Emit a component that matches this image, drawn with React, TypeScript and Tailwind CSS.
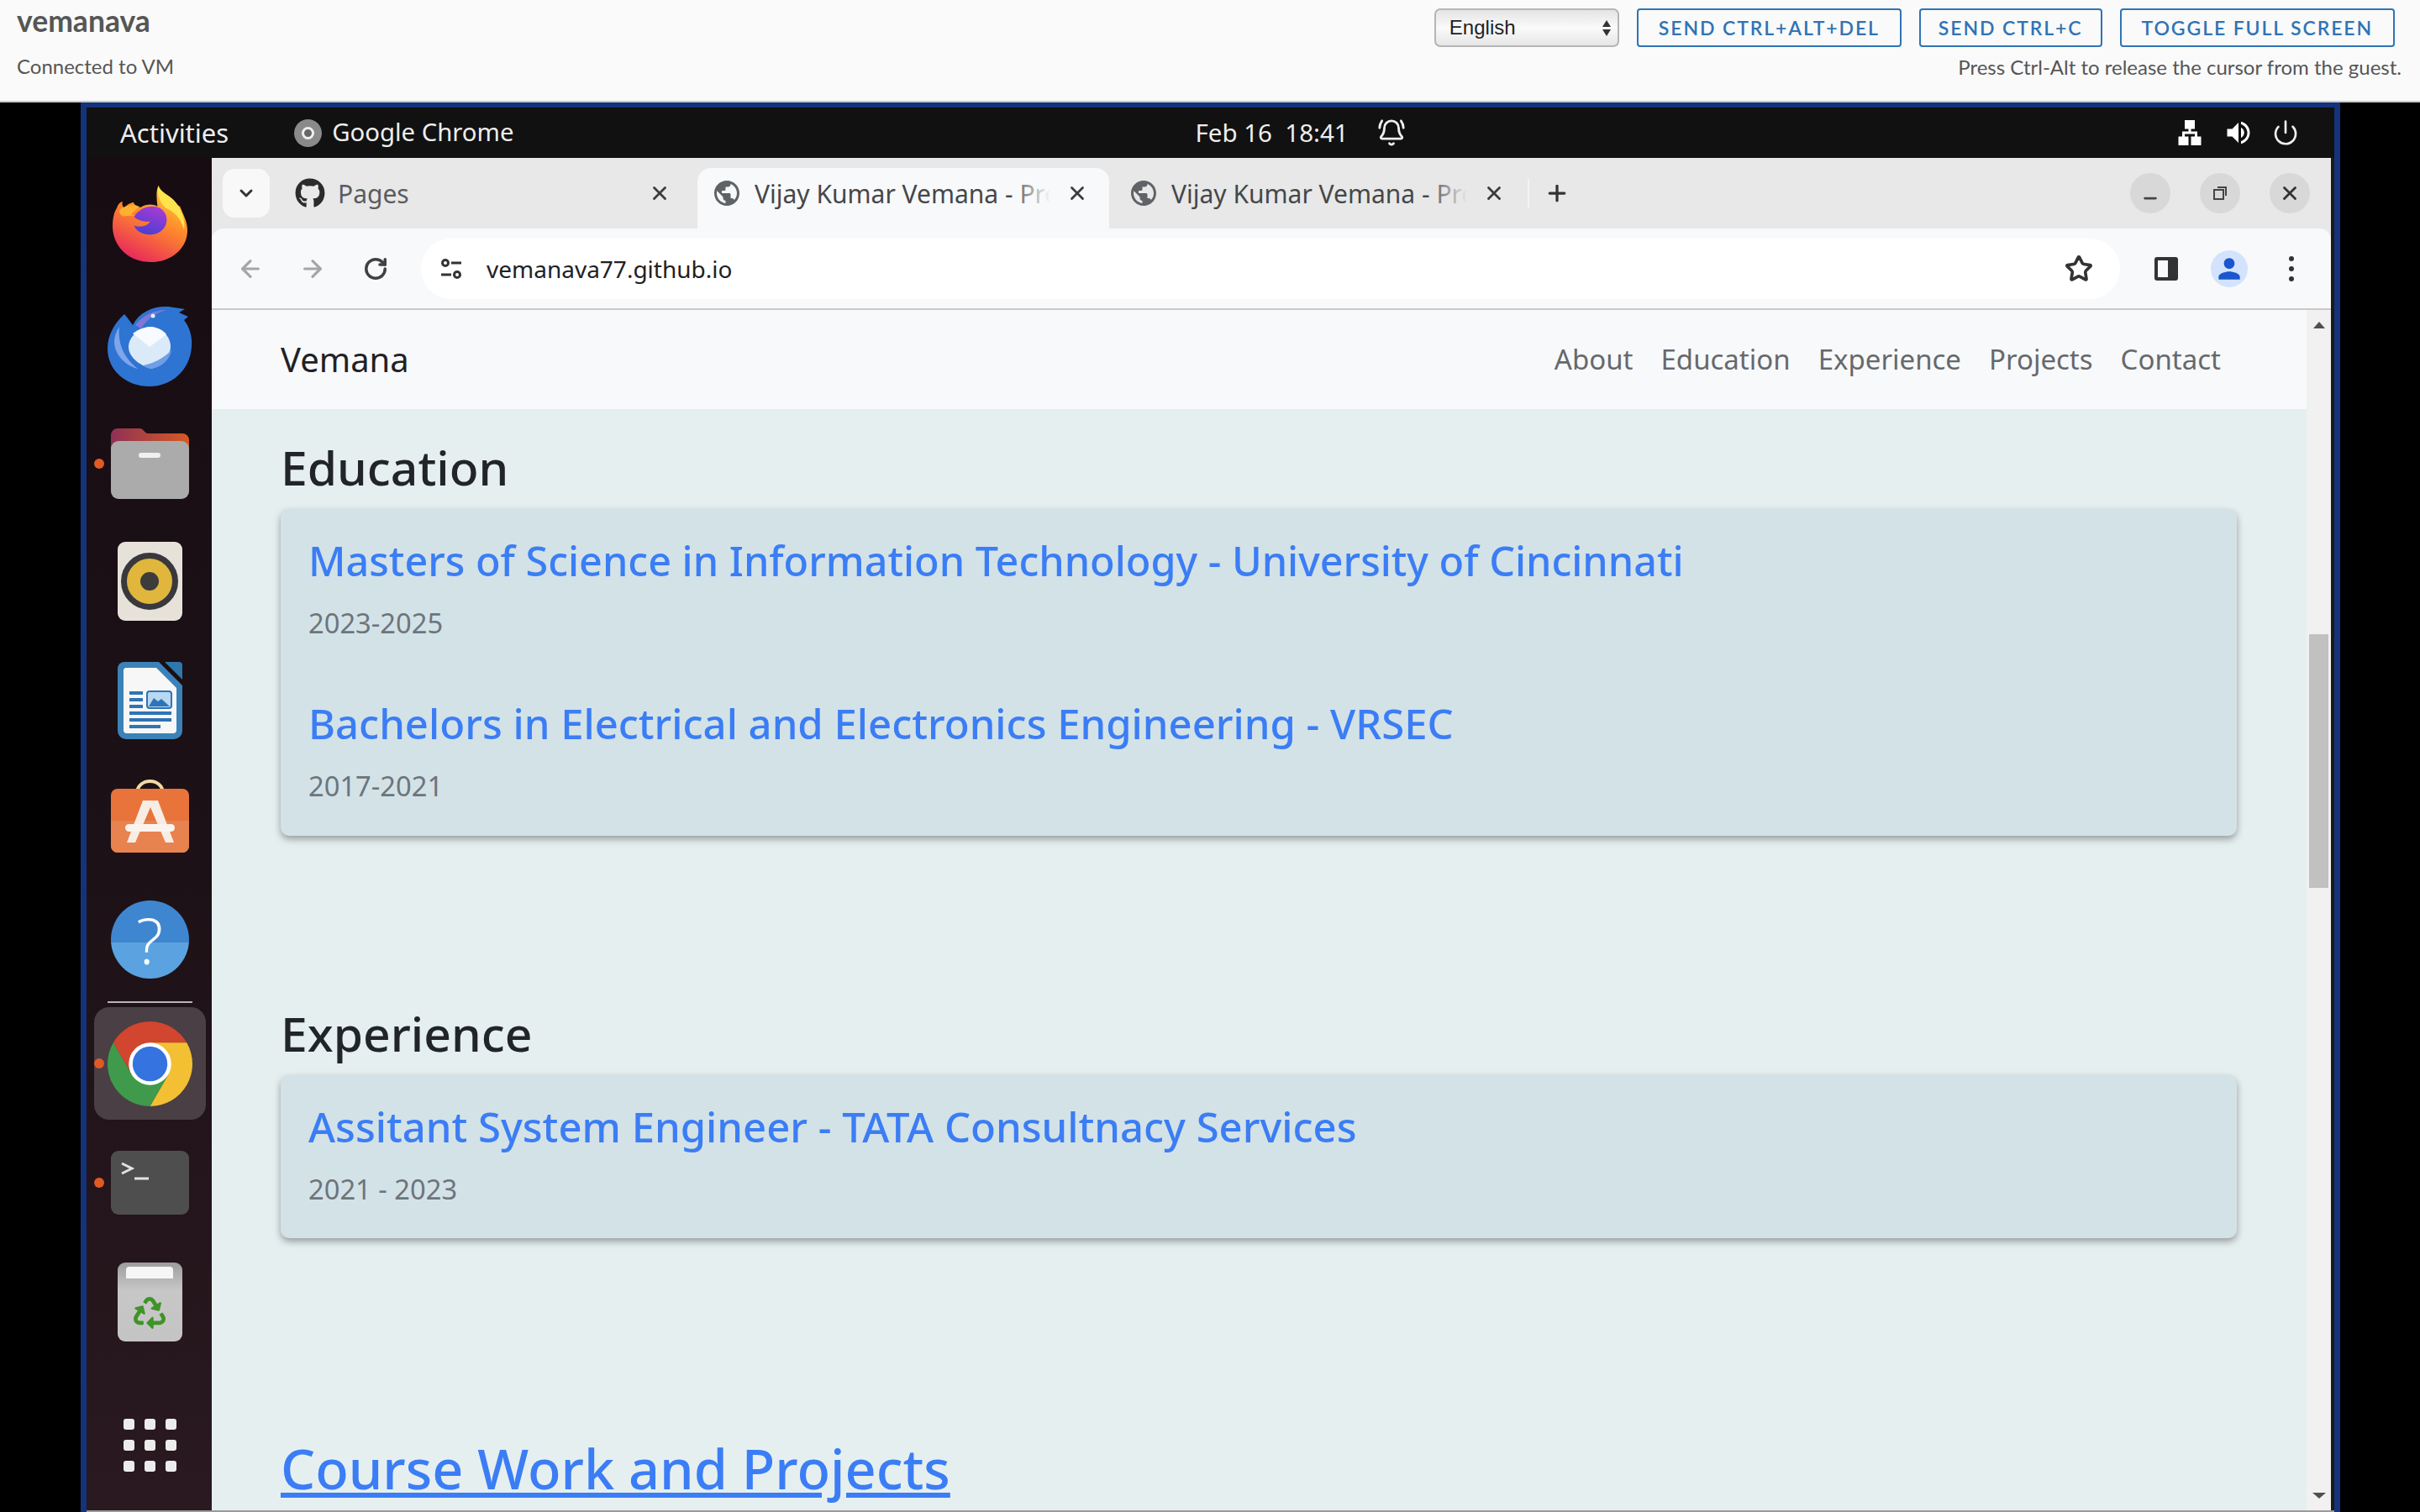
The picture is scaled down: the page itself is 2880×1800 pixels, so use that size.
import { Star, Power, BellRing, RotateCw, ArrowLeft, ArrowRight, ChevronDown, X, Plus, Minus } from "lucide-react";
import { FaGithub, FaRecycle } from "react-icons/fa";
import { MdPublic, MdPerson, MdLan, MdVolumeUp } from "react-icons/md";
import type { ReactNode } from "react";

const ubuntu = "font-['Noto_Sans','Open_Sans',sans-serif]";

function Firefox() {
  return (
    <svg viewBox="0 0 90 92" className="h-[91px] w-[89px]">
      <defs>
        <linearGradient id="ffBody" x1="0.8" y1="0" x2="0.3" y2="1">
          <stop offset="0" stopColor="#ffd53a" />
          <stop offset="0.45" stopColor="#ff8a2b" />
          <stop offset="1" stopColor="#e8265e" />
        </linearGradient>
        <linearGradient id="ffCore" x1="0.7" y1="0" x2="0.3" y2="1">
          <stop offset="0" stopColor="#a83ad6" />
          <stop offset="1" stopColor="#4a3fd0" />
        </linearGradient>
      </defs>
      <path d="M55 0c3 8 12 11 18 17 4 4 5 7 8 8l3 7c4 9 6 15 6 22 0 21-19 38-44 38S1 75 0 50c0-9 1-17 5-23 1-4 4-7 7-8-1 3 0 6 2 8 3-4 7-6 11-7 1 3 5 6 9 6 6-4 15-4 20-1-1-9-2-18 1-25Z" fill="url(#ffBody)" />
      <path d="M55 0c3 8 12 11 18 17 8 8 15 22 13 36-4-14-12-22-22-26-7-6-11-16-9-27Z" fill="#ffe34d" />
      <path d="M8 30c6-6 16-8 24-5-4 4-6 5-9 9 3 3 8 2 12 3 0 0-12-2-22 0-3-1-5-4-5-7Z" fill="#ffb02e" />
      <path d="M26 38c2-7 13-14 24-13 10 1 16 9 15 18-1 10-11 17-22 16-9-1-15-5-17-11 8 3 17 0 19-5-5 1-13 0-19-5Z" fill="url(#ffCore)" />
    </svg>
  );
}

function Thunderbird() {
  return (
    <svg viewBox="0 0 101 97" className="h-[97px] w-[101px]">
      <path d="M30 24C38 8 55 1 72 2L92 5 85 9 96 14 91 18C98 27 101 38 100 50 98 78 76 97 50 97 22 97 0 78 0 52 0 36 8 22 20 11 26 18 30 24 30 24Z" fill="#2e74d2" />
      <path d="M33 24C42 12 56 6 70 6 56 10 46 18 40 28Z" fill="#7f78d8" />
      <circle cx="54" cy="13" r="2.5" fill="#dff0ff" />
      <path d="M14 26C12 44 18 62 36 76 20 72 8 58 8 44c0-6 2-12 6-18Z" fill="#7fa5ea" />
      <path d="M52 26C66 28 75 38 75 50 75 60 62 72 52 76 38 72 25 62 25 50 25 38 38 26 52 26Z" fill="#dbeaf8" />
      <path d="M30 34C38 28 46 26 52 26 60 27 66 30 70 35L50 50Z" fill="#f7fbff" />
      <path d="M42 72C54 70 66 64 76 54 74 66 62 76 50 76Z" fill="#6f9fe6" />
    </svg>
  );
}

function Folder() {
  return (
    <svg viewBox="0 0 93 84" className="h-[84px] w-[93px]">
      <defs>
        <linearGradient id="fTab" x1="0" y1="0" x2="1" y2="0">
          <stop offset="0" stopColor="#8f3155" />
          <stop offset="1" stopColor="#d65a24" />
        </linearGradient>
      </defs>
      <path d="M0 8a8 8 0 0 1 8-8h26c5 0 6 6 10 6h41a8 8 0 0 1 8 8v20H0Z" fill="url(#fTab)" />
      <rect x="0" y="15" width="93" height="69" rx="9" fill="#ababab" />
      <rect x="33" y="29" width="26" height="6" rx="3" fill="#f0f0f0" />
    </svg>
  );
}

function Rhythmbox() {
  return (
    <div className="flex h-[94px] w-[77px] items-center justify-center rounded-[9px] bg-[#e6e2da]">
      <div className="flex h-[68px] w-[68px] items-center justify-center rounded-full border-[7px] border-[#38383d] bg-[#e0b63c]">
        <div className="h-[22px] w-[22px] rounded-full bg-[#3c3c3c]" />
      </div>
    </div>
  );
}

function Writer() {
  return (
    <svg viewBox="0 0 77 92" className="h-[92px] w-[77px]">
      <path d="M8 0h41l28 28v54a10 10 0 0 1-10 10H10A10 10 0 0 1 0 82V8a8 8 0 0 1 8-8Z" fill="#3b82b8" />
      <path d="M56 0h17a4 4 0 0 1 4 4v17Z" fill="#2f77ad" />
      <path d="M9 7h37l24 24v50a4 4 0 0 1-4 4H11a4 4 0 0 1-4-4V9Z" fill="#f7f7f7" />
      <path d="M14 35h16v4H14Zm0 8h16v4H14Zm0 8h16v4H14Zm0 8h50v4H14Zm0 8h50v4H14Zm0 8h37v4H14Z" fill="#2f74b5" />
      <rect x="35" y="35" width="29" height="20" rx="3" fill="#b8d8f2" stroke="#2f74b5" strokeWidth="2" />
      <path d="M37 53l6-10 5 4 4-3 10 9Z" fill="#2f74b5" />
    </svg>
  );
}

function AppStore() {
  return (
    <svg viewBox="0 0 93 88" className="h-[88px] w-[93px]">
      <path d="M31 18c0-20 31-20 31 0" fill="none" stroke="#f1d9a4" strokeWidth="4" />
      <rect x="0" y="12" width="93" height="76" rx="8" fill="#e8743b" />
      <path d="M0 50h93v30a8 8 0 0 1-8 8H8a8 8 0 0 1-8-8Z" fill="#e8824f" />
      <path d="M38 26h18l19 50H65L47 34 29 76H19Z" fill="#f8ede5" />
      <rect x="17" y="54" width="59" height="9" rx="4.5" fill="#fbf3ee" />
    </svg>
  );
}

function Help() {
  return (
    <div className="flex h-[93px] w-[93px] items-center justify-center rounded-full bg-[linear-gradient(180deg,#3f86d0_0%,#3f86d0_54%,#5ba3e0_54%,#5ba3e0_100%)] font-['Open_Sans',sans-serif] text-[76px] font-light leading-none text-white">
      ?
    </div>
  );
}

function Chrome() {
  return (
    <svg viewBox="0 0 100 100" className="h-[101px] w-[101px]">
      <path d="M93.3 25A50 50 0 0 0 6.7 25L28.35 62.5 50 50V25Z" fill="#d2452f" />
      <path d="M50 100A50 50 0 0 0 93.3 25H50V50L71.65 62.5Z" fill="#f3c033" />
      <path d="M6.7 25A50 50 0 0 0 50 100L71.65 62.5 50 50 28.35 62.5Z" fill="#409a4c" />
      <circle cx="50" cy="50" r="25" fill="#fff" />
      <circle cx="50" cy="50" r="20.5" fill="#3473e0" />
    </svg>
  );
}

function Terminal() {
  return (
    <div className="h-[76px] w-[93px] rounded-[9px] bg-[#4e4e4e] pl-[12px] pt-[12px]">
      <svg viewBox="0 0 34 24" className="h-[24px] w-[34px]" fill="none" stroke="#e2e2e2" strokeWidth="3">
        <path d="M1 3l12 6-12 6" />
        <path d="M16 21h17" />
      </svg>
    </div>
  );
}

function Trash() {
  return (
    <div className="flex h-[94px] w-[77px] flex-col items-center rounded-[9px] bg-[linear-gradient(180deg,#9d9d9d_0%,#c7c7c7_35%,#c4c4c4_100%)] pt-[5px]">
      <div className="h-[14px] w-[56px] rounded-t-[4px] bg-[#f6f6f6]" />
      <FaRecycle className="mt-[22px] h-[38px] w-[38px] text-[#3f9428]" />
    </div>
  );
}

function GridDots() {
  return (
    <div className="grid grid-cols-3 gap-x-[12px] gap-y-[12px]">
      {Array.from({ length: 9 }).map((_, i) => (
        <div key={i} className="h-[13px] w-[13px] rounded-[3px] bg-[#ececec]" />
      ))}
    </div>
  );
}

function Dock() {
  return (
    <aside className="flex w-[149px] shrink-0 flex-col items-center bg-[linear-gradient(180deg,#170c12_0%,#1c1116_50%,#2a1920_100%)] pl-px pt-[33px]">
      <Firefox />
      <div className="mt-[51px]"><Thunderbird /></div>
      <div className="relative mt-[50px]">
        <div className="absolute left-[-20px] top-1/2 h-[12px] w-[12px] -translate-y-1/2 rounded-full bg-[#e05a26]" />
        <Folder />
      </div>
      <div className="mt-[51px]"><Rhythmbox /></div>
      <div className="mt-[49px]"><Writer /></div>
      <div className="mt-[47px]"><AppStore /></div>
      <div className="mt-[57px]"><Help /></div>
      <div className="mt-[27px] h-[2px] w-[101px] bg-[#b9b3b5]" />
      <div className="relative mt-[5px] flex h-[134px] w-[133px] items-center justify-center rounded-[18px] bg-[#4a3f44]">
        <div className="absolute left-[0px] top-1/2 h-[12px] w-[12px] -translate-y-1/2 rounded-full bg-[#e05a26]" />
        <Chrome />
      </div>
      <div className="relative mt-[37px]">
        <div className="absolute left-[-20px] top-1/2 h-[12px] w-[12px] -translate-y-1/2 rounded-full bg-[#e05a26]" />
        <Terminal />
      </div>
      <div className="mt-[57px]"><Trash /></div>
      <div className="mt-[92px]"><GridDots /></div>
    </aside>
  );
}

function Tab({ title, active, width }: { title: string; active?: boolean; width: string }) {
  return (
    <div className={`flex h-[72px] shrink-0 items-center rounded-t-[16px] ${width} ${active ? "bg-[#f8f9fa] pb-[12px]" : ""}`}>
      <MdPublic className="ml-[17px] h-[36px] w-[36px] shrink-0 text-[#5f6368]" />
      <div className="relative ml-[15px] w-[352px] overflow-hidden whitespace-nowrap text-[30px] text-[#45474a]">
        {title}
        <div className={`absolute right-0 top-0 h-full w-[48px] bg-gradient-to-r from-transparent ${active ? "to-[#f8f9fa]" : "to-[#e8e8e8]"}`} />
      </div>
      <X className="ml-[19px] h-[26px] w-[26px] shrink-0 text-[#3c3c3c]" strokeWidth={2.6} />
    </div>
  );
}

function WinBtn({ children }: { children: ReactNode }) {
  return <div className="flex h-[48px] w-[48px] items-center justify-center rounded-full bg-[#d8d8d8]">{children}</div>;
}

function ChromeTop() {
  return (
    <div className={`shrink-0 bg-[#e8e8e8] ${ubuntu}`}>
      <div className="flex h-[84px] items-center">
        <div className="ml-[13px] flex h-[58px] w-[56px] shrink-0 items-center justify-center rounded-[14px] bg-[#f8f8f8]">
          <ChevronDown className="h-[24px] w-[24px] text-[#333]" strokeWidth={3} />
        </div>
        <FaGithub className="ml-[30px] h-[36px] w-[36px] shrink-0 text-[#2b2b2b]" />
        <span className="ml-[15px] w-[370px] shrink-0 text-[30px] text-[#5a5c5f]">Pages</span>
        <X className="h-[26px] w-[26px] shrink-0 text-[#3c3c3c]" strokeWidth={2.6} />
        <div className="ml-[32px] self-end"><Tab title="Vijay Kumar Vemana - Profile" active width="w-[490px]" /></div>
        <div className="ml-[6px]"><Tab title="Vijay Kumar Vemana - Profile" width="w-[492px]" /></div>
        <div className="h-[34px] w-[2px] shrink-0 bg-[#f4f4f4]" />
        <Plus className="ml-[18px] h-[30px] w-[30px] shrink-0 text-[#333]" strokeWidth={2.6} />
        <div className="ml-auto mr-[25px] flex gap-[35px]">
          <WinBtn><Minus className="mt-[12px] h-[22px] w-[22px] text-[#444]" strokeWidth={3} /></WinBtn>
          <WinBtn>
            <svg viewBox="0 0 20 20" className="h-[20px] w-[20px]" fill="none" stroke="#444" strokeWidth="2">
              <rect x="3" y="6" width="11" height="11" />
              <path d="M7 3h10v10" />
            </svg>
          </WinBtn>
          <WinBtn><X className="h-[26px] w-[26px] text-[#333]" strokeWidth={2.6} /></WinBtn>
        </div>
      </div>
      <div className="flex h-[97px] items-center rounded-t-[14px] border-b-2 border-[#c9c9c9] bg-[#f8f9fa]">
        <ArrowLeft className="ml-[30px] h-[32px] w-[32px] text-[#a4a6a9]" strokeWidth={2.4} />
        <ArrowRight className="ml-[42px] h-[32px] w-[32px] text-[#a4a6a9]" strokeWidth={2.4} />
        <RotateCw className="ml-[44px] h-[30px] w-[30px] text-[#3f4245]" strokeWidth={2.8} />
        <div className="ml-[39px] flex h-[72px] w-[2022px] shrink-0 items-center rounded-full bg-white">
          <svg viewBox="0 0 30 30" className="ml-[21px] h-[30px] w-[30px]" fill="none" stroke="#333" strokeWidth="3">
            <circle cx="8" cy="8" r="3.5" />
            <path d="M15 8h12M3 22h12" />
            <circle cx="22" cy="22" r="3.5" />
          </svg>
          <span className="ml-[27px] text-[28px] text-[#202124]">vemanava77.github.io</span>
          <Star className="ml-auto mr-[32px] h-[34px] w-[34px] text-[#333]" strokeWidth={2.6} />
        </div>
        <div className="ml-[41px] h-[28px] w-[28px] rounded-[3px] border-[4px] border-r-[12px] border-[#333]" />
        <div className="ml-[39px] flex h-[44px] w-[44px] shrink-0 items-center justify-center rounded-full bg-[#d3e3fd]">
          <MdPerson className="h-[38px] w-[38px] text-[#1a56d0]" />
        </div>
        <div className="ml-[49px] flex flex-col gap-[6px]">
          <div className="h-[6px] w-[6px] rounded-full bg-[#333]" />
          <div className="h-[6px] w-[6px] rounded-full bg-[#333]" />
          <div className="h-[6px] w-[6px] rounded-full bg-[#333]" />
        </div>
      </div>
    </div>
  );
}

function Entry({ title, date, className, size }: { title: string; date: string; className?: string; size: string }) {
  return (
    <div className={className}>
      <h3 className={`${size} font-medium leading-[60px] text-[#3b7df5]`}>{title}</h3>
      <p className="mt-[21px] text-[32.7px] leading-[48px] text-[#6c757d]">{date}</p>
    </div>
  );
}

function Page() {
  return (
    <div className={`flex min-h-0 flex-1 ${ubuntu}`}>
      <div className="min-w-0 flex-1 overflow-hidden bg-[#e6eff0]">
        <nav className="flex h-[118px] items-center justify-between bg-[#f8f9fa] pl-[82px] pr-[102px]">
          <span className="text-[40px] text-[#1f2124]">Vemana</span>
          <div className="flex gap-[33px] text-[33px] text-[#66696c]">
            <span>About</span>
            <span>Education</span>
            <span>Experience</span>
            <span>Projects</span>
            <span>Contact</span>
          </div>
        </nav>
        <div className="pl-[82px] pr-[83px]">
          <h2 className="mt-[36px] text-[57px] font-medium leading-[66px] text-[#212529]">Education</h2>
          <div className="mt-[17px] h-[389px] rounded-[10px] bg-[#d3e2e7] px-[33px] pt-[31px] shadow-[0_4px_8px_rgba(0,0,0,0.35)]">
            <Entry size="text-[48.5px]" title="Masters of Science in Information Technology - University of Cincinnati" date="2023-2025" />
            <Entry size="text-[49px]" className="mt-[65px]" title="Bachelors in Electrical and Electronics Engineering - VRSEC" date="2017-2021" />
          </div>
          <h2 className="mt-[202px] text-[57px] font-medium leading-[66px] text-[#212529]">Experience</h2>
          <div className="mt-[17px] h-[194px] rounded-[10px] bg-[#d3e2e7] px-[33px] pt-[31px] shadow-[0_4px_8px_rgba(0,0,0,0.35)]">
            <Entry size="text-[49px]" title="Assitant System Engineer - TATA Consultnacy Services" date="2021 - 2023" />
          </div>
          <h2 className="mt-[235px] text-[64.8px] font-medium leading-[78px] text-[#3b7df5] underline">Course Work and Projects</h2>
        </div>
      </div>
      <div className="flex w-[29px] shrink-0 flex-col items-center bg-[#f1f1f1]">
        <div className="mt-[14px] h-0 w-0 border-x-[7px] border-b-[8px] border-x-transparent border-b-[#505050]" />
        <div className="mt-[364px] h-[302px] w-[23px] bg-[#c1c1c1]" />
        <div className="mb-[14px] mt-auto h-0 w-0 border-x-[8px] border-t-[7px] border-x-transparent border-t-[#505050]" />
      </div>
    </div>
  );
}

function GnomePanel() {
  return (
    <div className={`flex h-[60px] shrink-0 items-center bg-[#111111] text-[#eeeeee] ${ubuntu}`}>
      <span className="ml-[40px] text-[31px]">Activities</span>
      <div className="ml-[78px] flex h-[33px] w-[33px] shrink-0 items-center justify-center rounded-full bg-[#8a8a8a]">
        <div className="h-[15px] w-[15px] rounded-full border-[3px] border-[#eee] bg-[#666]" />
      </div>
      <span className="ml-[12px] text-[29.3px]">Google Chrome</span>
      <span className="ml-[811px] text-[29.5px]">Feb 16&nbsp;&nbsp;18:41</span>
      <BellRing className="ml-[34px] h-[34px] w-[34px] text-[#eee]" strokeWidth={2} />
      <MdLan className="ml-auto h-[36px] w-[36px] text-white" />
      <MdVolumeUp className="ml-[22px] h-[36px] w-[36px] text-white" />
      <Power className="ml-[22px] mr-[42px] h-[32px] w-[32px] text-[#eee]" strokeWidth={2} />
    </div>
  );
}

function TopButton({ label, className }: { label: string; className: string }) {
  return (
    <button className={`flex h-[46px] items-center rounded-[4px] border-2 border-[#2f74b5] text-[23px] font-semibold uppercase tracking-[1.9px] text-[#2f74b5] ${className}`}>
      {label}
    </button>
  );
}

function ConsoleBar() {
  return (
    <header className="flex h-[122px] shrink-0 justify-between border-b-2 border-[#c9c9c9] bg-[#fafafa] pl-[20px] pr-[22px] font-['Lato','Open_Sans',sans-serif]">
      <div>
        <div className="mt-[8px] text-[35.5px] font-bold leading-[34px] text-[#565656]">vemanava</div>
        <div className="mt-[24px] text-[24px] leading-[26px] text-[#565656]">Connected to VM</div>
      </div>
      <div className="flex flex-col items-end">
        <div className="mt-[10px] flex gap-[21px] pr-[8px]">
          <div className="flex h-[46px] w-[220px] items-center justify-between rounded-[7px] border-2 border-[#b5b5b5] bg-[linear-gradient(180deg,#e4e4e4_0%,#fafafa_50%,#e6e6e6_100%)] pl-[16px] pr-[8px] font-['Liberation_Sans',sans-serif] text-[24px] text-[#222]">
            English
            <div className="flex flex-col gap-[3px]">
              <div className="h-0 w-0 border-x-[5px] border-b-[8px] border-x-transparent border-b-[#333]" />
              <div className="h-0 w-0 border-x-[5px] border-t-[8px] border-x-transparent border-t-[#333]" />
            </div>
          </div>
          <TopButton label="Send Ctrl+Alt+Del" className="px-[24px]" />
          <TopButton label="Send Ctrl+C" className="px-[21px]" />
          <TopButton label="Toggle Full Screen" className="px-[24px]" />
        </div>
        <div className="mt-[11px] text-[24px] leading-[26px] text-[#565656]">Press Ctrl-Alt to release the cursor from the guest.</div>
      </div>
    </header>
  );
}

export default function App() {
  return (
    <div className="flex h-[1800px] w-[2880px] flex-col overflow-hidden bg-black">
      <ConsoleBar />
      <div className="ml-[96px] flex min-h-0 w-[2689px] flex-1 flex-col border-x-[7px] border-t-[6px] border-[#14337a] bg-[#9a9a9a] pb-[2px]">
        <GnomePanel />
        <div className="flex min-h-0 flex-1">
          <Dock />
          <div className="flex min-w-0 flex-1 flex-col border-r-[4px] border-[#1a1a1a]">
            <ChromeTop />
            <Page />
          </div>
        </div>
      </div>
    </div>
  );
}
